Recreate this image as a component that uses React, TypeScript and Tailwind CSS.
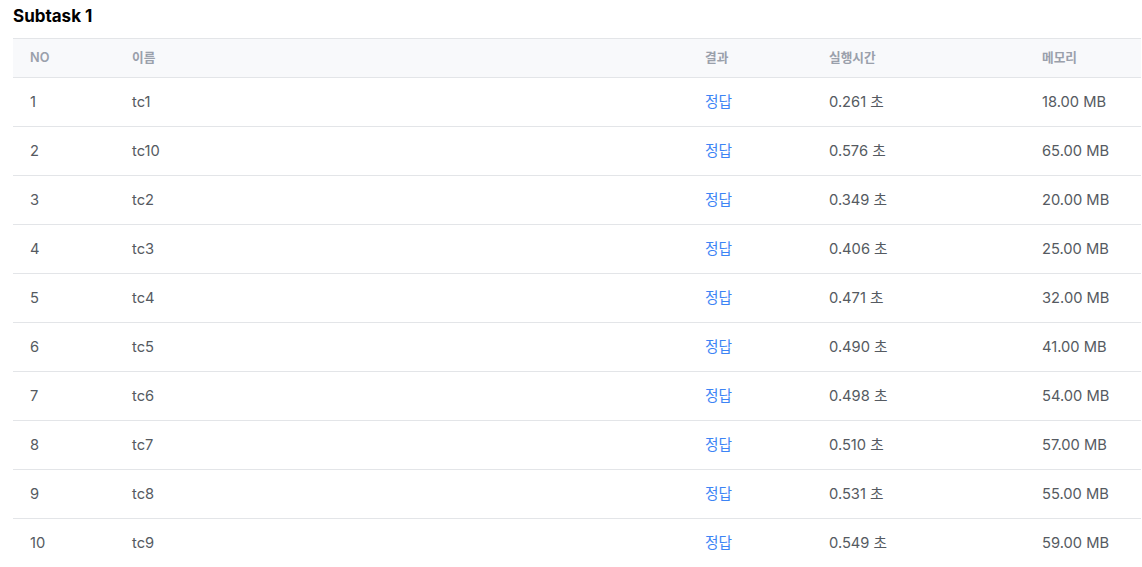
import React from "react";

const rows = [
  ["1", "tc1", "0.261 초", "18.00 MB"],
  ["2", "tc10", "0.576 초", "65.00 MB"],
  ["3", "tc2", "0.349 초", "20.00 MB"],
  ["4", "tc3", "0.406 초", "25.00 MB"],
  ["5", "tc4", "0.471 초", "32.00 MB"],
  ["6", "tc5", "0.490 초", "41.00 MB"],
  ["7", "tc6", "0.498 초", "54.00 MB"],
  ["8", "tc7", "0.510 초", "57.00 MB"],
  ["9", "tc8", "0.531 초", "55.00 MB"],
  ["10", "tc9", "0.549 초", "59.00 MB"],
];

export default function App() {
  return (
    <div
      className="bg-white pl-[13px] pr-[1px] pt-[4px]"
      style={{ fontFamily: "Inter, 'Noto Sans CJK KR', sans-serif" }}
    >
      <div className="text-[17px] leading-[24px] font-bold text-black mb-[10px]">Subtask 1</div>
      <table className="w-[1128px] table-fixed border-collapse">
        <colgroup>
          <col className="w-[102px]" />
          <col className="w-[573px]" />
          <col className="w-[124px]" />
          <col className="w-[213px]" />
          <col className="w-[116px]" />
        </colgroup>
        <thead>
          <tr className="bg-[#f8f9fb] border-t border-b border-[#e3e5e8] h-[39px]">
            {["NO", "이름", "결과", "실행시간", "메모리"].map((h) => (
              <th key={h} className="text-left pl-[17px] text-[12.7px] font-semibold text-[#9aa0ab] p-0">
                {h}
              </th>
            ))}
          </tr>
        </thead>
        <tbody>
          {rows.map((r, i) => (
            <tr key={r[0]} className={`h-[49px] ${i < rows.length - 1 ? "border-b border-[#e3e5e8]" : ""}`}>
              <td className="pl-[17px] text-[14.7px] text-[#555a61] p-0">{r[0]}</td>
              <td className="pl-[17px] text-[14.7px] text-[#555a61] p-0">{r[1]}</td>
              <td className="pl-[17px] text-[14.7px] text-[#3d84f5] p-0">정답</td>
              <td className="pl-[17px] text-[14.7px] text-[#555a61] p-0">{r[2]}</td>
              <td className="pl-[17px] text-[14.7px] text-[#555a61] p-0">{r[3]}</td>
            </tr>
          ))}
        </tbody>
      </table>
    </div>
  );
}
